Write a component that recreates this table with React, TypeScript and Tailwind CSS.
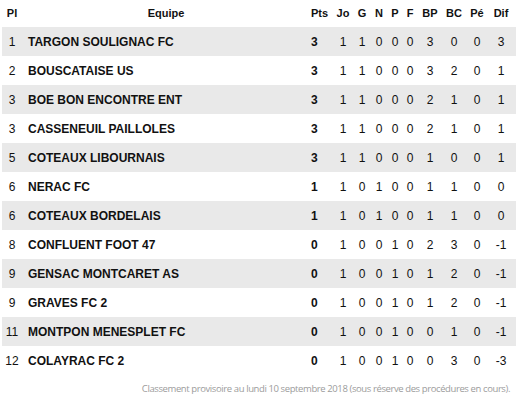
import React from 'react';

interface Team {
  pl: number;
  name: string;
  pts: number;
  jo: number;
  g: number;
  n: number;
  p: number;
  f: number;
  bp: number;
  bc: number;
  pe: number;
  dif: number;
}

const teams: Team[] = [
  { pl: 1, name: 'TARGON SOULIGNAC FC', pts: 3, jo: 1, g: 1, n: 0, p: 0, f: 0, bp: 3, bc: 0, pe: 0, dif: 3 },
  { pl: 2, name: 'BOUSCATAISE US', pts: 3, jo: 1, g: 1, n: 0, p: 0, f: 0, bp: 3, bc: 2, pe: 0, dif: 1 },
  { pl: 3, name: 'BOE BON ENCONTRE ENT', pts: 3, jo: 1, g: 1, n: 0, p: 0, f: 0, bp: 2, bc: 1, pe: 0, dif: 1 },
  { pl: 3, name: 'CASSENEUIL PAILLOLES', pts: 3, jo: 1, g: 1, n: 0, p: 0, f: 0, bp: 2, bc: 1, pe: 0, dif: 1 },
  { pl: 5, name: 'COTEAUX LIBOURNAIS', pts: 3, jo: 1, g: 1, n: 0, p: 0, f: 0, bp: 1, bc: 0, pe: 0, dif: 1 },
  { pl: 6, name: 'NERAC FC', pts: 1, jo: 1, g: 0, n: 1, p: 0, f: 0, bp: 1, bc: 1, pe: 0, dif: 0 },
  { pl: 6, name: 'COTEAUX BORDELAIS', pts: 1, jo: 1, g: 0, n: 1, p: 0, f: 0, bp: 1, bc: 1, pe: 0, dif: 0 },
  { pl: 8, name: 'CONFLUENT FOOT 47', pts: 0, jo: 1, g: 0, n: 0, p: 1, f: 0, bp: 2, bc: 3, pe: 0, dif: -1 },
  { pl: 9, name: 'GENSAC MONTCARET AS', pts: 0, jo: 1, g: 0, n: 0, p: 1, f: 0, bp: 1, bc: 2, pe: 0, dif: -1 },
  { pl: 9, name: 'GRAVES FC 2', pts: 0, jo: 1, g: 0, n: 0, p: 1, f: 0, bp: 1, bc: 2, pe: 0, dif: -1 },
  { pl: 11, name: 'MONTPON MENESPLET FC', pts: 0, jo: 1, g: 0, n: 0, p: 1, f: 0, bp: 0, bc: 1, pe: 0, dif: -1 },
  { pl: 12, name: 'COLAYRAC FC 2', pts: 0, jo: 1, g: 0, n: 0, p: 1, f: 0, bp: 0, bc: 3, pe: 0, dif: -3 },
];

const App: React.FC = () => {
  return (
    <div className="w-[516px] h-[401px] bg-white text-[#111] font-['Liberation_Sans',Arial,sans-serif]">
      <div className="ml-[2px] w-[514px]">
        <div className="flex h-[27px] items-center text-[11px] font-bold">
          <div className="w-[20px] text-center">Pl</div>
          <div className="w-[288px] text-center">Equipe</div>
          <div className="w-[23px] pl-[1px]">Pts</div>
          <div className="w-[20px] text-center">Jo</div>
          <div className="w-[18px] text-center">G</div>
          <div className="w-[16px] text-center">N</div>
          <div className="w-[16px] text-center">P</div>
          <div className="w-[14px] text-center">F</div>
          <div className="w-[26px] text-center">BP</div>
          <div className="w-[22px] text-center">BC</div>
          <div className="w-[24px] text-center">Pé</div>
          <div className="w-[24px] text-center">Dif</div>
        </div>
        {teams.map((t, i) => (
          <div
            key={t.name}
            className={`flex h-[29px] items-center text-[12px] ${i % 2 === 0 ? 'bg-[#e9e9e9]' : 'bg-white'}`}
          >
            <div className="w-[20px] text-center">{t.pl}</div>
            <div className="w-[288px] pl-[6px] font-bold">{t.name}</div>
            <div className="w-[23px] pl-[1px] font-bold">{t.pts}</div>
            <div className="w-[20px] text-center">{t.jo}</div>
            <div className="w-[18px] text-center">{t.g}</div>
            <div className="w-[16px] text-center">{t.n}</div>
            <div className="w-[16px] text-center">{t.p}</div>
            <div className="w-[14px] text-center">{t.f}</div>
            <div className="w-[26px] text-center">{t.bp}</div>
            <div className="w-[22px] text-center">{t.bc}</div>
            <div className="w-[24px] text-center">{t.pe}</div>
            <div className="w-[24px] text-center">{t.dif}</div>
          </div>
        ))}
      </div>
      <div className="flex h-[28px] items-center justify-end pr-[6px] text-[9.5px] tracking-[-0.4px] text-[#9c9c9c] font-['Open_Sans',sans-serif]">
        Classement provisoire au lundi 10 septembre 2018 (sous réserve des procédures en cours).
      </div>
    </div>
  );
};

export default App;
